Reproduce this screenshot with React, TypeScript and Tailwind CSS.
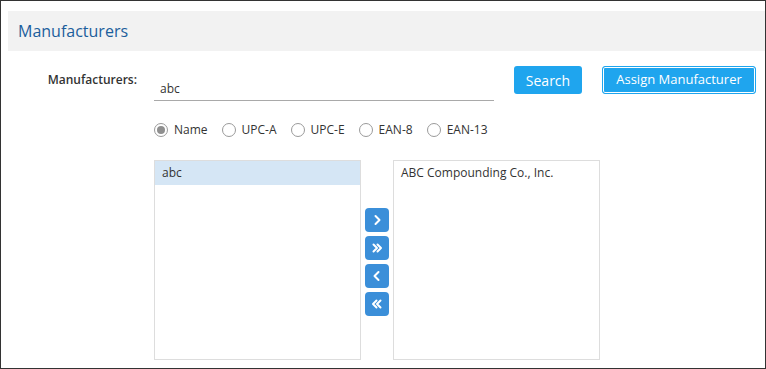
import { useState } from "react";

const font = { fontFamily: '"Open Sans", "Liberation Sans", sans-serif' };

const codeTypes = ["Name", "UPC-A", "UPC-E", "EAN-8", "EAN-13"];

const Radio = ({ label, checked, onSelect }: { label: string; checked: boolean; onSelect: () => void }) => (
  <label className="flex items-center gap-[6px] cursor-pointer" onClick={onSelect}>
    <span className="w-[14px] h-[14px] rounded-full border border-[#9a9a9a] bg-white flex items-center justify-center">
      {checked && <span className="w-[8px] h-[8px] rounded-full bg-[#8f8f8f]" />}
    </span>
    <span className="text-[12px] text-[#333]">{label}</span>
  </label>
);

const ArrowButton = ({ children }: { children: React.ReactNode }) => (
  <button className="w-[24px] h-[24px] rounded-[4px] bg-[#3b8fd9] flex items-center justify-center text-white">
    {children}
  </button>
);

const Chevron = ({ left, double }: { left?: boolean; double?: boolean }) => (
  <svg width="12" height="12" viewBox="0 0 12 12" fill="none" stroke="white" strokeWidth="2" strokeLinecap="round" strokeLinejoin="round">
    <g transform={left ? "translate(12,0) scale(-1,1)" : undefined}>
      {double ? (
        <>
          <path d="M2.5 2.5 L6 6 L2.5 9.5" />
          <path d="M6.5 2.5 L10 6 L6.5 9.5" />
        </>
      ) : (
        <path d="M4.5 2 L8.5 6 L4.5 10" />
      )}
    </g>
  </svg>
);

const App = () => {
  const [type, setType] = useState("Name");
  const [query, setQuery] = useState("abc");

  return (
    <div className="w-[766px] h-[369px] border border-[#333] pt-[10px] pl-[7px] bg-white overflow-hidden" style={font}>
      <div className="h-[40px] bg-[#f2f2f2] pl-[10px] flex items-center">
        <h1 className="text-[16px] text-[#1c5e9c]">Manufacturers</h1>
      </div>

      <div className="flex items-start mt-[15px]">
        <div className="w-[129px] text-right text-[12px] font-semibold text-[#333] mt-[5px]">Manufacturers:</div>
        <input
          value={query}
          onChange={(e) => setQuery(e.target.value)}
          className="ml-[17px] w-[340px] h-[24px] mt-[11px] border-b border-[#a9a9a9] px-[6px] text-[12px] text-[#333] outline-none"
        />
        <button className="ml-[20px] w-[68px] h-[28px] rounded-[3px] bg-[#1fa5ee] text-white text-[14px]">Search</button>
        <button className="ml-[20px] w-[154px] h-[28px] rounded-[3px] bg-[#1fa5ee] border border-[#1fa5ee] shadow-[inset_0_0_0_1px_#ffffff] text-white text-[13px]">
          Assign Manufacturer
        </button>
      </div>

      <div className="flex items-center gap-[14px] ml-[146px] mt-[20px]">
        {codeTypes.map((t) => (
          <Radio key={t} label={t} checked={type === t} onSelect={() => setType(t)} />
        ))}
      </div>

      <div className="flex ml-[146px] mt-[21px] gap-[4px]">
        <div className="w-[207px] h-[200px] border border-[#ddd]">
          <div className="h-[24px] bg-[#d5e6f5] pl-[7px] flex items-center text-[12px] text-[#333]">abc</div>
        </div>
        <div className="flex flex-col gap-[4px] pt-[48px]">
          <ArrowButton><Chevron /></ArrowButton>
          <ArrowButton><Chevron double /></ArrowButton>
          <ArrowButton><Chevron left /></ArrowButton>
          <ArrowButton><Chevron left double /></ArrowButton>
        </div>
        <div className="w-[207px] h-[200px] border border-[#ddd]">
          <div className="h-[24px] pl-[7px] flex items-center text-[12px] text-[#333]">ABC Compounding Co., Inc.</div>
        </div>
      </div>
    </div>
  );
};

export default App;
